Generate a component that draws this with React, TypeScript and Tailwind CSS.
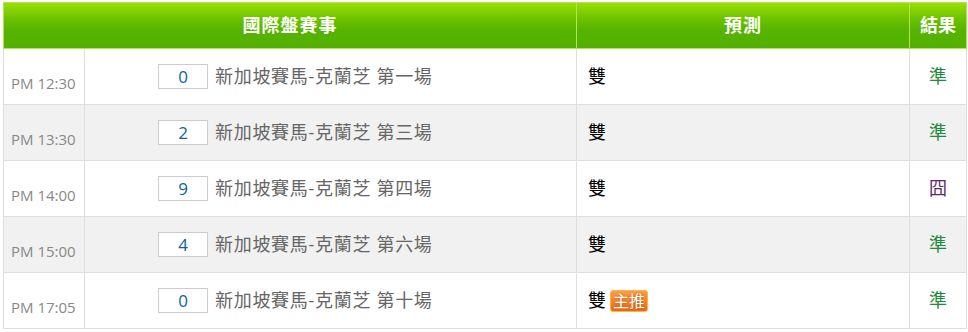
import React from 'react';

interface RaceRow {
  time: string;
  num: number;
  race: string;
  pick: string;
  hot?: boolean;
  result: string;
  hit: boolean;
}

const rows: RaceRow[] = [
  { time: 'PM 12:30', num: 0, race: '新加坡賽馬-克蘭芝 第一場', pick: '雙', result: '準', hit: true },
  { time: 'PM 13:30', num: 2, race: '新加坡賽馬-克蘭芝 第三場', pick: '雙', result: '準', hit: true },
  { time: 'PM 14:00', num: 9, race: '新加坡賽馬-克蘭芝 第四場', pick: '雙', result: '囧', hit: false },
  { time: 'PM 15:00', num: 4, race: '新加坡賽馬-克蘭芝 第六場', pick: '雙', result: '準', hit: true },
  { time: 'PM 17:05', num: 0, race: '新加坡賽馬-克蘭芝 第十場', pick: '雙', hot: true, result: '準', hit: true },
];

const font = { fontFamily: '"Open Sans", "Noto Sans CJK TC", sans-serif' };

export default function App() {
  return (
    <div className="w-[968px] h-[332px] bg-white pl-[3px] pt-[2px]" style={font}>
      <table className="w-[963px] border-collapse table-fixed">
        <colgroup>
          <col className="w-[81px]" />
          <col className="w-[492px]" />
          <col className="w-[333px]" />
          <col className="w-[57px]" />
        </colgroup>
        <thead>
          <tr className="h-[46px] bg-[linear-gradient(to_bottom,#9ade00_0%,#6cc200_35%,#56b300_60%,#52b000_100%)]">
            <th colSpan={2} className="border border-[#b2e35c] text-white text-[18px] font-bold tracking-[1px]">
              國際盤賽事
            </th>
            <th className="border border-[#b2e35c] text-white text-[18px] font-bold tracking-[1px]">預測</th>
            <th className="border border-[#b2e35c] text-white text-[18px] font-bold">結果</th>
          </tr>
        </thead>
        <tbody>
          {rows.map((r, i) => (
            <tr key={i} className={i % 2 === 1 ? 'h-[56px] bg-[#f1f1f1]' : 'h-[56px] bg-white'}>
              <td className="border border-[#dedede] pl-[7px] pt-[13px] text-[15px] text-[#888888] whitespace-nowrap">
                {r.time}
              </td>
              <td className="border border-[#dedede] pl-[73px]">
                <div className="flex items-center gap-[7px]">
                  <span className="w-[50px] h-[25px] bg-white border border-[#cccccc] flex items-center justify-center text-[17px] text-[#1060a8]">
                    {r.num}
                  </span>
                  <span className="text-[18px] text-[#666666] whitespace-nowrap tracking-[0.7px]">{r.race}</span>
                </div>
              </td>
              <td className="border border-[#dedede] pl-[11px]">
                <div className="flex items-center gap-[4px]">
                  <span className="text-[18px] text-black">{r.pick}</span>
                  {r.hot && (
                    <span className="h-[22px] px-[2px] rounded-[3px] border border-[#ffb347] bg-[linear-gradient(to_bottom,#ff9d45,#ea6a12)] text-white text-[16px] leading-[20px] [text-shadow:0_0_2px_rgba(120,50,0,0.6)]">
                      主推
                    </span>
                  )}
                </div>
              </td>
              <td
                className={
                  r.hit
                    ? 'border border-[#dedede] text-center text-[18px] text-[#1d8a3c]'
                    : 'border border-[#dedede] text-center text-[18px] text-[#5a2d6a]'
                }
              >
                {r.result}
              </td>
            </tr>
          ))}
        </tbody>
      </table>
    </div>
  );
}
